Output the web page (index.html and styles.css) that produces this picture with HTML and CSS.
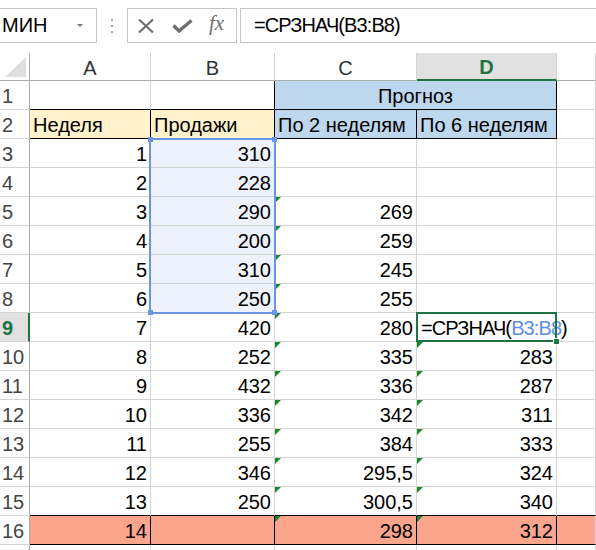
FILE: index.html
```html
<!DOCTYPE html>
<html>
<head>
    <meta charset="utf-8">
    <title>Прогноз продаж</title>
    <link rel="stylesheet" href="styles.css">
</head>
<body>
    <div class="formula-bar">
        <div class="name-box">
            <span>МИН</span>
            <span class="caret"></span>
        </div>
        <div class="grip"><i></i><i></i><i></i></div>
        <div class="fx-buttons">
            <svg class="btn-cancel" width="18" height="16" viewBox="0 0 18 16">
                <path d="M2 1.5 L16 14.5 M16 1.5 L2 14.5" stroke="#6e6e6e" stroke-width="2.2" fill="none"/>
            </svg>
            <svg class="btn-enter" width="21" height="14" viewBox="0 0 21 14">
                <path d="M1.5 6.5 L7 12 L19.5 1.5" stroke="#6e6e6e" stroke-width="3.4" fill="none"/>
            </svg>
            <span class="btn-fx">fx</span>
        </div>
        <div class="formula-input">=СРЗНАЧ(B3:B8)</div>
    </div>

    <div class="sheet">
        <!-- column headers -->
        <div class="cell corner"></div>
        <div class="cell hdr-col">A</div>
        <div class="cell hdr-col">B</div>
        <div class="cell hdr-col">C</div>
        <div class="cell hdr-col hdr-col-on">D</div>
        <div class="cell hdr-col"></div>

        <div class="cell hdr-row">1</div>
        <div class="cell line-b"></div>
        <div class="cell line-b line-r"></div>
        <div class="cell blue line-b line-r center span2">Прогноз</div>
        <div class="cell"></div>

        <div class="cell hdr-row">2</div>
        <div class="cell yellow line-b line-r">Неделя</div>
        <div class="cell yellow line-b line-r">Продажи</div>
        <div class="cell blue line-b line-r">По 2 неделям</div>
        <div class="cell blue line-b line-r">По 6 неделям</div>
        <div class="cell"></div>

        <div class="cell hdr-row">3</div>
        <div class="cell num">1</div>
        <div class="cell num pick">310</div>
        <div class="cell num"></div>
        <div class="cell num"></div>
        <div class="cell"></div>

        <div class="cell hdr-row">4</div>
        <div class="cell num">2</div>
        <div class="cell num pick">228</div>
        <div class="cell num"></div>
        <div class="cell num"></div>
        <div class="cell"></div>

        <div class="cell hdr-row">5</div>
        <div class="cell num">3</div>
        <div class="cell num pick">290</div>
        <div class="cell num warn">269</div>
        <div class="cell num"></div>
        <div class="cell"></div>

        <div class="cell hdr-row">6</div>
        <div class="cell num">4</div>
        <div class="cell num pick">200</div>
        <div class="cell num warn">259</div>
        <div class="cell num"></div>
        <div class="cell"></div>

        <div class="cell hdr-row">7</div>
        <div class="cell num">5</div>
        <div class="cell num pick">310</div>
        <div class="cell num warn">245</div>
        <div class="cell num"></div>
        <div class="cell"></div>

        <div class="cell hdr-row">8</div>
        <div class="cell num">6</div>
        <div class="cell num pick">250</div>
        <div class="cell num warn">255</div>
        <div class="cell num"></div>
        <div class="cell"></div>

        <div class="cell hdr-row hdr-row-on">9</div>
        <div class="cell num">7</div>
        <div class="cell num">420</div>
        <div class="cell num warn">280</div>
        <div class="cell active">=СРЗНАЧ(<span class="ref">B3:B8</span>)</div>
        <div class="cell"></div>

        <div class="cell hdr-row">10</div>
        <div class="cell num">8</div>
        <div class="cell num">252</div>
        <div class="cell num warn">335</div>
        <div class="cell num warn">283</div>
        <div class="cell"></div>

        <div class="cell hdr-row">11</div>
        <div class="cell num">9</div>
        <div class="cell num">432</div>
        <div class="cell num warn">336</div>
        <div class="cell num warn">287</div>
        <div class="cell"></div>

        <div class="cell hdr-row">12</div>
        <div class="cell num">10</div>
        <div class="cell num">336</div>
        <div class="cell num warn">342</div>
        <div class="cell num warn">311</div>
        <div class="cell"></div>

        <div class="cell hdr-row">13</div>
        <div class="cell num">11</div>
        <div class="cell num">255</div>
        <div class="cell num warn">384</div>
        <div class="cell num warn">333</div>
        <div class="cell"></div>

        <div class="cell hdr-row">14</div>
        <div class="cell num">12</div>
        <div class="cell num">346</div>
        <div class="cell num warn">295,5</div>
        <div class="cell num warn">324</div>
        <div class="cell"></div>

        <div class="cell hdr-row">15</div>
        <div class="cell num line-b">13</div>
        <div class="cell num line-b">250</div>
        <div class="cell num warn line-b">300,5</div>
        <div class="cell num warn line-b">340</div>
        <div class="cell line-b"></div>

        <div class="cell hdr-row">16</div>
        <div class="cell num total line-b line-r">14</div>
        <div class="cell num total line-b line-r"></div>
        <div class="cell num total warn line-b line-r">298</div>
        <div class="cell num total warn line-b line-r">312</div>
        <div class="cell total line-b"></div>

        <!-- row 17, only its top edge shows -->
        <div class="cell hdr-row"></div>
        <div class="cell"></div>
        <div class="cell"></div>
        <div class="cell"></div>
        <div class="cell"></div>
        <div class="cell"></div>

        <!-- range B3:B8 used by the formula -->
        <div class="range">
            <span class="knob tl"></span>
            <span class="knob tr"></span>
            <span class="knob bl"></span>
            <span class="knob br"></span>
        </div>
    </div>
</body>
</html>
```

FILE: styles.css
```css
body {
    margin: 0;
    width: 596px;
    height: 550px;
    overflow: hidden;
    background-color: #fff;
    font-family: "Liberation Sans", Arial, sans-serif;
    color: #000;
}

/* formula bar */
.formula-bar {
    display: flex;
    height: 35px;
    margin-top: 8px;
    margin-bottom: 10px;
}
.name-box {
    width: 97px;
    box-sizing: border-box;
    border: 1px solid #c6c6c6;
    border-left: none;
    display: flex;
    align-items: center;
    padding-left: 2px;
    font-size: 20px;
    line-height: 23px;
}
.caret {
    margin-left: auto;
    margin-right: 13px;
    width: 0;
    height: 0;
    border-left: 3px solid transparent;
    border-right: 3px solid transparent;
    border-top: 3px solid #7a7a7a;
}
.grip {
    width: 30px;
    display: flex;
    flex-direction: column;
    align-items: center;
    justify-content: center;
    gap: 4px;
}
.grip i {
    width: 2px;
    height: 2px;
    background-color: #a6a6a6;
}
.fx-buttons {
    width: 110px;
    box-sizing: border-box;
    border: 1px solid #c6c6c6;
    display: flex;
    align-items: center;
}
.btn-cancel {
    margin-left: 9px;
}
.btn-enter {
    margin-left: 17px;
    margin-top: 1px;
}
.btn-fx {
    margin-left: 16px;
    font-family: "Liberation Serif", "Times New Roman", serif;
    font-style: italic;
    font-size: 21px;
    color: #6e6e6e;
    margin-top: -4px;
}
.formula-input {
    flex: 1;
    margin-left: 3px;
    border: 1px solid #c6c6c6;
    border-right: none;
    display: flex;
    align-items: center;
    padding-left: 13px;
    font-size: 20px;
    line-height: 23px;
    letter-spacing: -0.9px;
}

/* sheet grid */
.sheet {
    position: relative;
    display: grid;
    grid-template-columns: 30px 121px 124px 142px 140px 1fr;
    grid-template-rows: 28px;
    grid-auto-rows: 29px;
}
.cell {
    box-sizing: border-box;
    border-right: 1px solid #d4d4d4;
    border-bottom: 1px solid #d4d4d4;
    padding: 0 3px 1px 3px;
    display: flex;
    align-items: flex-end;
    font-size: 20px;
    line-height: 23px;
    white-space: nowrap;
}
.num {
    justify-content: flex-end;
}
.center {
    justify-content: center;
}
.span2 {
    grid-column: span 2;
}
.line-b {
    border-bottom-color: #000;
}
.line-r {
    border-right-color: #000;
}
.yellow {
    background-color: #fff2cc;
}
.blue {
    background-color: #bdd7ee;
}
.total {
    background-color: #fba58d;
}
.pick {
    background-color: #eef2fc;
}

/* headers */
.corner {
    position: relative;
    border-bottom-color: #ababab;
    border-right-color: #ababab;
}
.corner::after {
    content: "";
    position: absolute;
    right: 3px;
    bottom: 3px;
    width: 0;
    height: 0;
    border-left: 21px solid transparent;
    border-bottom: 20px solid #dfdfdf;
}
.hdr-col {
    justify-content: center;
    border-bottom-color: #ababab;
    padding-bottom: 0;
    color: #333;
}
.hdr-col-on {
    background-color: #e1e1e1;
    border-bottom: 2px solid #217346;
    color: #217346;
    font-weight: bold;
}
.hdr-row {
    border-right-color: #ababab;
    padding-left: 2px;
    color: #444;
}
.hdr-row-on {
    background-color: #e1e1e1;
    border-right: 2px solid #217346;
    color: #217346;
    font-weight: bold;
}

/* green error markers */
.warn {
    position: relative;
}
.warn::before {
    content: "";
    position: absolute;
    top: 0;
    left: 0;
    width: 0;
    height: 0;
    border-top: 6px solid #16882f;
    border-right: 6px solid transparent;
}

/* active cell D9 */
.active {
    position: relative;
    padding-left: 4px;
    letter-spacing: -0.9px;
}
.active::after {
    content: "";
    position: absolute;
    top: -1px;
    left: -1px;
    right: -1px;
    bottom: -1px;
    border: 2px solid #217346;
}
.active::before {
    content: "";
    position: absolute;
    right: -4px;
    bottom: -4px;
    width: 5px;
    height: 5px;
    background-color: #217346;
    border: 1px solid #fff;
    z-index: 1;
}
.ref {
    color: #5f8ee6;
}

/* formula range highlight */
.range {
    position: absolute;
    left: 149px;
    top: 85px;
    width: 127px;
    height: 176px;
    box-sizing: border-box;
    border: 2px solid #6a95e4;
}
.knob {
    position: absolute;
    width: 5px;
    height: 5px;
    background-color: #6a95e4;
}
.knob.tl { left: -3px; top: -3px; }
.knob.tr { right: -3px; top: -3px; }
.knob.bl { left: -3px; bottom: -3px; }
.knob.br { right: -3px; bottom: -3px; }
```
